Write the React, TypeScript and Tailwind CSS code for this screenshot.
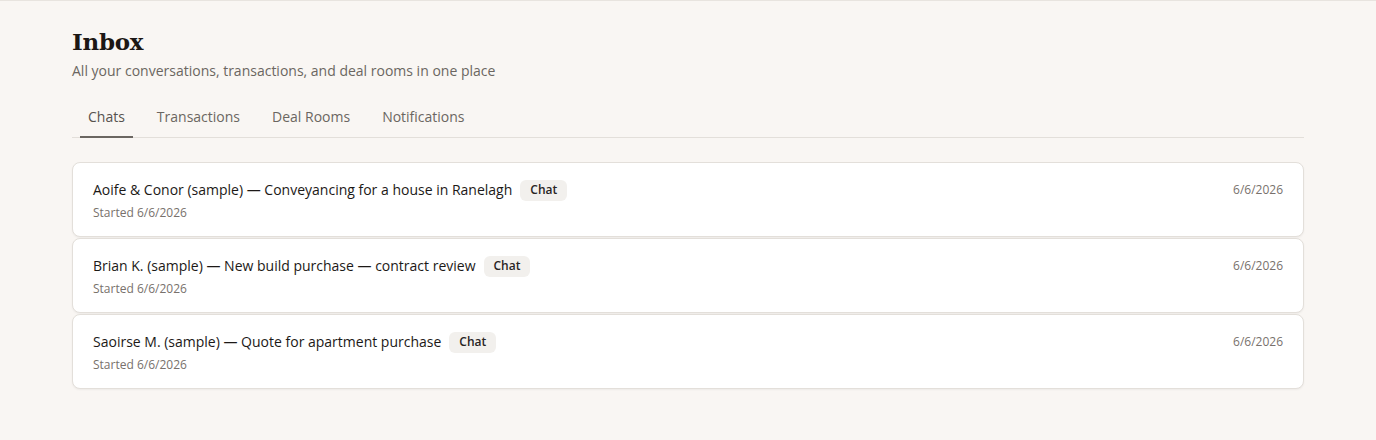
import React from 'react';

interface Chat {
    id: number;
    title: string;
    started: string;
    updated: string;
}

const CHATS: Chat[] = [
    { id: 1, title: 'Aoife & Conor (sample) — Conveyancing for a house in Ranelagh', started: '6/6/2026', updated: '6/6/2026' },
    { id: 2, title: 'Brian K. (sample) — New build purchase — contract review', started: '6/6/2026', updated: '6/6/2026' },
    { id: 3, title: 'Saoirse M. (sample) — Quote for apartment purchase', started: '6/6/2026', updated: '6/6/2026' },
];

const TABS = ['Chats', 'Transactions', 'Deal Rooms', 'Notifications'];

const App: React.FC = () => {
    return (
        <div
            className="min-h-[440px] bg-[#f9f6f3] border-t border-[#e8e4df] text-[#1c1917]"
            style={{ fontFamily: '"Open Sans", "Liberation Sans", sans-serif' }}
        >
            <div className="mx-auto max-w-[1232px] pt-[25px]">
                {/* Header */}
                <h1 className="text-[23px] leading-[32px] font-bold text-[#1c1714] font-['DejaVu_Serif',serif] tracking-[-0.3px]">
                    Inbox
                </h1>
                <p className="mt-[3px] text-[14px] leading-[20px] text-[#6b6661]">
                    All your conversations, transactions, and deal rooms in one place
                </p>

                {/* Tabs */}
                <div className="mt-[20px] flex gap-4 border-b border-[#e3dfda] pl-2">
                    {TABS.map((tab, i) => (
                        <button
                            key={tab}
                            className={`px-2 pb-[9px] pt-[6px] text-[14px] leading-[20px] -mb-px border-b-2 ${
                                i === 0 ? 'border-[#6b6661] text-[#57524d]' : 'border-transparent text-[#6b6661]'
                            }`}
                        >
                            {tab}
                        </button>
                    ))}
                </div>

                {/* Chat list */}
                <div className="mt-[24px] flex flex-col gap-[1px]">
                    {CHATS.map((chat) => (
                        <div
                            key={chat.id}
                            className="flex items-start justify-between rounded-lg border border-[#e3dfda] bg-white px-5 pt-[17px] pb-[15px] shadow-[0_1px_2px_rgba(0,0,0,0.05)]"
                        >
                            <div>
                                <div className="flex h-5 items-center gap-2">
                                    <span className="text-[14px] leading-[20px] text-[#1c1917]">{chat.title}</span>
                                    <span className="flex h-[21px] items-center rounded-md bg-[#f2f0ed] px-[10px] text-[12px] leading-[16px] font-semibold text-[#292524]">
                                        Chat
                                    </span>
                                </div>
                                <div className="mt-[5px] text-[12px] leading-[16px] text-[#78716c]">
                                    Started {chat.started}
                                </div>
                            </div>
                            <div className="pt-[2px] text-[12px] leading-[16px] text-[#78716c]">{chat.updated}</div>
                        </div>
                    ))}
                </div>
            </div>
        </div>
    );
};

export default App;
